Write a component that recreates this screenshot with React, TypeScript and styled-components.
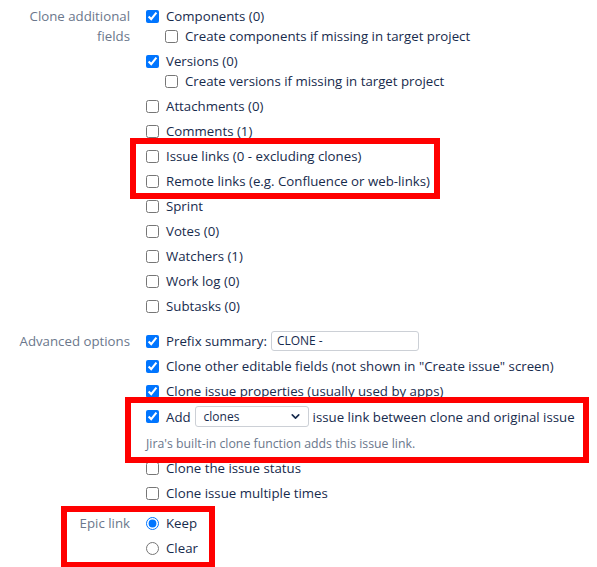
import styled, { createGlobalStyle } from 'styled-components';
import { ChevronDown } from 'lucide-react';

const GlobalStyle = createGlobalStyle`
  html, body {
    margin: 0;
    padding: 0;
    background: #fff;
  }
  body {
    font-family: "Open Sans", "Noto Sans", sans-serif;
    font-size: 13.25px;
    color: #172b4d;
  }
`;

const Page = styled.div`
  position: relative;
  width: 597px;
  height: 567px;
  padding-top: 6px;
  box-sizing: border-box;
  overflow: hidden;
`;

const Section = styled.div<{ $gap?: number }>`
  display: grid;
  grid-template-columns: 130px 1fr;
  column-gap: 16px;
  margin-top: ${({ $gap }) => $gap ?? 0}px;
`;

const Label = styled.div`
  text-align: right;
  color: #6b778c;
  line-height: 20px;
`;

const Options = styled.div`
  display: flex;
  flex-direction: column;
  gap: 5px;
`;

const Item = styled.div`
  display: flex;
  flex-direction: column;
`;

const Option = styled.label`
  display: flex;
  align-items: center;
  gap: 7px;
  min-height: 20px;
  line-height: 20px;
  white-space: nowrap;
`;

const Nested = styled.div`
  padding-left: 19px;
`;

const Box = styled.input`
  margin: 0;
  width: 13px;
  height: 13px;
  flex: none;
`;

const Inline = styled.span`
  display: flex;
  align-items: center;
  gap: 4px;
`;

const TextInput = styled.input`
  width: 148px;
  height: 20px;
  box-sizing: border-box;
  border: 1px solid #ccd0d6;
  border-radius: 3px;
  padding: 0 5px;
  font: inherit;
  font-size: 12px;
  color: #172b4d;
`;

const Select = styled.span`
  display: flex;
  align-items: center;
  justify-content: space-between;
  width: 114px;
  height: 21px;
  box-sizing: border-box;
  border: 1px solid #ccd0d6;
  border-radius: 3px;
  padding: 0 6px 0 8px;
  font-size: 12px;
`;

const Help = styled.div`
  margin-top: 8px;
  line-height: 18px;
  font-size: 12.3px;
  color: #6b778c;
`;

// red annotation frames drawn over the form
const Mark = styled.div<{ $x: number; $y: number; $w: number; $h: number }>`
  position: absolute;
  left: ${({ $x }) => $x}px;
  top: ${({ $y }) => $y}px;
  width: ${({ $w }) => $w}px;
  height: ${({ $h }) => $h}px;
  box-sizing: border-box;
  border: 6px solid #ff0000;
  pointer-events: none;
`;

type CheckProps = { label: string; checked?: boolean };

function Check({ label, checked }: CheckProps) {
  return (
    <Option>
      <Box type="checkbox" defaultChecked={checked} />
      {label}
    </Option>
  );
}

const fields: CheckProps[] = [
  { label: 'Attachments (0)' },
  { label: 'Comments (1)' },
  { label: 'Issue links (0 - excluding clones)' },
  { label: 'Remote links (e.g. Confluence or web-links)' },
  { label: 'Sprint' },
  { label: 'Votes (0)' },
  { label: 'Watchers (1)' },
  { label: 'Work log (0)' },
  { label: 'Subtasks (0)' },
];

export default function App() {
  return (
    <>
      <GlobalStyle />
      <Page>
        <Section>
          <Label>
            Clone additional
            <br />
            fields
          </Label>
          <Options>
            <Item>
              <Check label="Components (0)" checked />
              <Nested>
                <Check label="Create components if missing in target project" />
              </Nested>
            </Item>
            <Item>
              <Check label="Versions (0)" checked />
              <Nested>
                <Check label="Create versions if missing in target project" />
              </Nested>
            </Item>
            {fields.map((f) => (
              <Check key={f.label} {...f} />
            ))}
          </Options>
        </Section>

        <Section $gap={15}>
          <Label>Advanced options</Label>
          <Options>
            <Option>
              <Box type="checkbox" defaultChecked />
              <Inline>
                Prefix summary:
                <TextInput defaultValue="CLONE -" />
              </Inline>
            </Option>
            <Check label={'Clone other editable fields (not shown in "Create issue" screen)'} checked />
            <Check label="Clone issue properties (usually used by apps)" checked />
            <Item>
              <Option>
                <Box type="checkbox" defaultChecked />
                <Inline>
                  Add
                  <Select>
                    clones
                    <ChevronDown size={13} strokeWidth={3} color="#172b4d" />
                  </Select>
                  issue link between clone and original issue
                </Inline>
              </Option>
              <Help>Jira's built-in clone function adds this issue link.</Help>
            </Item>
            <Check label="Clone the issue status" />
            <Check label="Clone issue multiple times" />
          </Options>
        </Section>

        <Section $gap={10}>
          <Label>Epic link</Label>
          <Options>
            <Option>
              <Box type="radio" name="epic" defaultChecked />
              Keep
            </Option>
            <Option>
              <Box type="radio" name="epic" />
              Clear
            </Option>
          </Options>
        </Section>

        <Mark $x={130} $y={138} $w={310} $h={61} />
        <Mark $x={125} $y={397} $w={464} $h={66} />
        <Mark $x={61} $y={506} $w={154} $h={62} />
      </Page>
    </>
  );
}
